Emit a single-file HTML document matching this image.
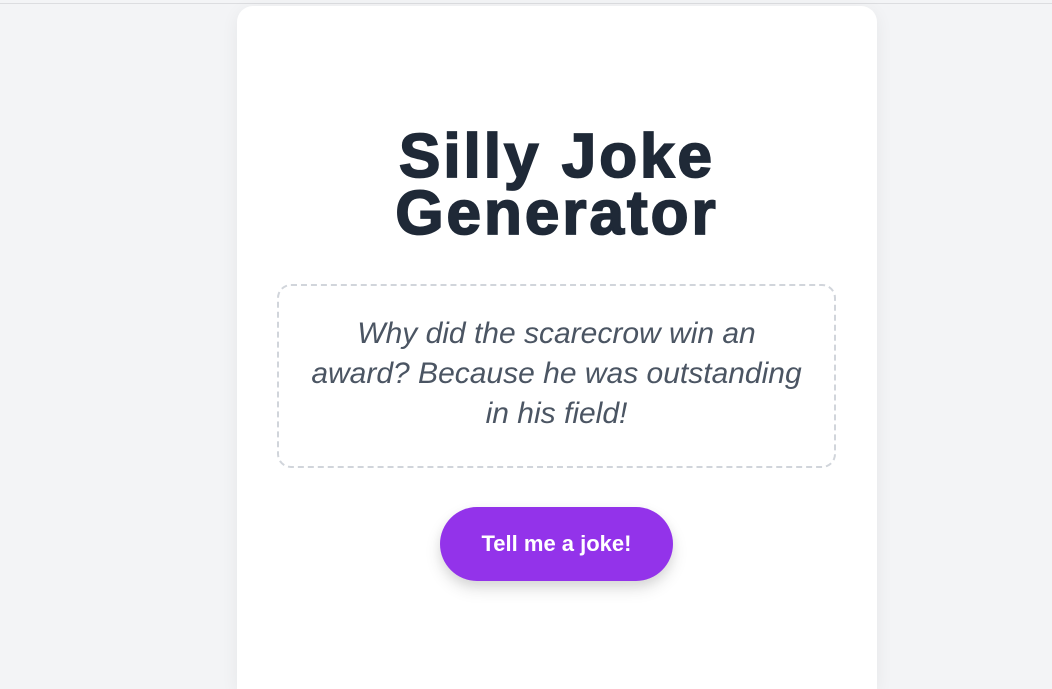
<!DOCTYPE html>
<html><head><meta charset="utf-8"><style>
html,body{margin:0;padding:0;}
body{width:1052px;height:689px;background:#f3f4f6;position:relative;overflow:hidden;font-family:"Liberation Sans",Arial,sans-serif;}
.topline{position:absolute;left:0;top:3px;width:1052px;height:1px;background:#dcdde0;}
.card{position:absolute;left:237px;top:6px;width:640px;height:683px;background:#fff;border-radius:16px 16px 0 0;box-shadow:0 4px 18px rgba(0,0,0,0.06);}
h1{position:absolute;left:0;top:122px;width:640px;margin:0;text-align:center;font-size:62px;line-height:57px;font-weight:bold;color:#1f2937;letter-spacing:3px;-webkit-text-stroke:1.8px #1f2937;}
.joke{position:absolute;left:40px;top:278px;width:495px;height:122px;padding:28px 30px 30px;border:2px dashed #d1d5db;border-radius:14px;text-align:center;font-style:italic;font-size:30px;line-height:40px;color:#4b5563;white-space:nowrap;}
.btn{position:absolute;left:203px;top:501px;width:233px;height:74px;border-radius:37px;background:#9333ea;color:#fff;font-weight:bold;font-size:22px;line-height:74px;text-align:center;box-shadow:0 8px 16px rgba(0,0,0,0.12),0 4px 10px rgba(0,0,0,0.06);}
</style></head><body>
<div class="topline"></div>
<div class="card">
<h1>Silly Joke<br>Generator</h1>
<div class="joke">Why did the scarecrow win an<br>award? Because he was outstanding<br>in his field!</div>
<div class="btn">Tell me a joke!</div>
</div>
</body></html>
